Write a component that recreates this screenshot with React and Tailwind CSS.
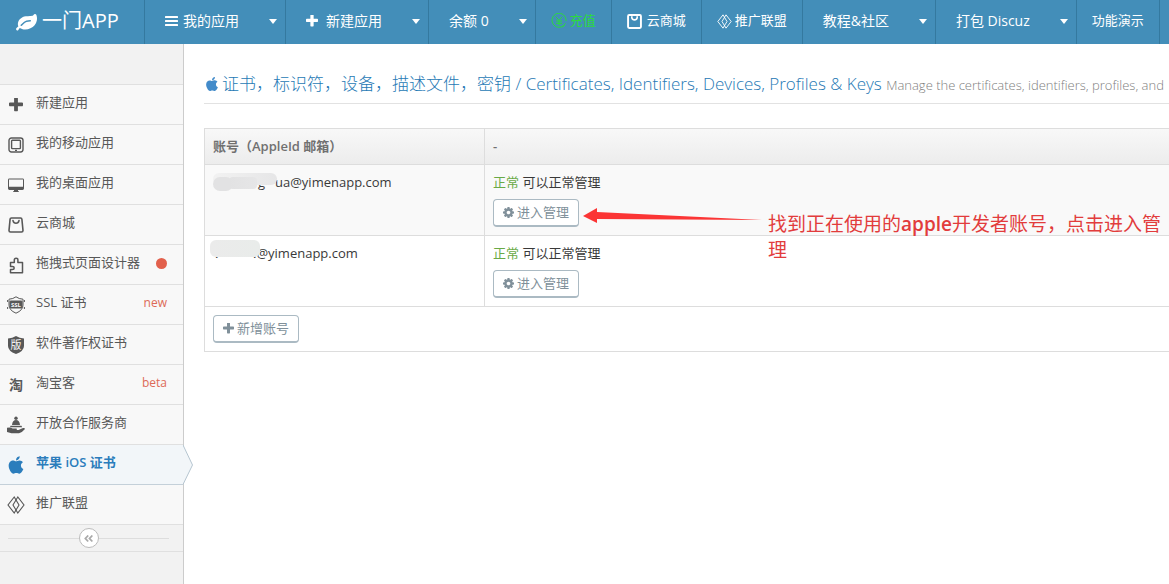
import React from "react";
import { FaApple, FaAngleDoubleLeft } from "react-icons/fa";

const LeafIcon = ({ className }) => (
  <svg viewBox="0 0 1792 1792" fill="currentColor" className={className}>
    <path d="M1280 832q0-26-19-45t-45-19q-172 0-318 49.5t-259.5 134-235.5 219.5q-19 21-19 45 0 26 19 45t45 19q24 0 45-19 27-24 74-71t67-66q137-124 268.5-176t313.5-52q26 0 45-19t19-45zm512-198q0 95-20 193-46 224-184.5 383t-357.5 268q-214 108-438 108-148 0-286-47-15-5-88-42t-96-37q-16 0-39.5 32t-45 70-52.5 70-60 32q-43 0-63.5-17.5t-45.5-59.5q-2-4-6-11t-5.5-10-3-9.5-1.5-13.5q0-35 31-73.5t68-65.5 68-56 31-48q0-4-14-38t-16-44q-9-51-9-104 0-115 43.5-220t119-184.5 170.5-139 204-95.5q55-18 145-25.5t179.5-9 178.5-6 163.5-24 113.5-56.5l29.5-29.5 29.5-28 27-20 36.5-16 43.5-4.5q39 0 70.5 46t47.5 112 24 124 8 96z" />
  </svg>
);

const PlusIcon = ({ className }) => (
  <svg viewBox="192 192 1408 1408" fill="currentColor" className={className}>
    <path d="M1600 736v192q0 40-28 68t-68 28h-416v416q0 40-28 68t-68 28h-192q-40 0-68-28t-28-68v-416h-416q-40 0-68-28t-28-68v-192q0-40 28-68t68-28h416v-416q0-40 28-68t68-28h192q40 0 68 28t28 68v416h416q40 0 68 28t28 68z" />
  </svg>
);

const CogIcon = ({ className }) => (
  <svg viewBox="128 128 1536 1536" fill="currentColor" className={className}>
    <path d="M1152 896q0-106-75-181t-181-75-181 75-75 181 75 181 181 75 181-75 75-181zm512-109v222q0 12-8 23t-20 13l-185 28q-19 54-39 91 35 50 107 138 10 12 10 25t-9 23q-27 37-99 108t-94 71q-12 0-26-9l-138-108q-44 23-91 38-16 136-29 186-7 28-36 28h-222q-14 0-24.5-8.5t-11.5-21.5l-28-184q-49-16-90-37l-141 107q-10 9-25 9-14 0-25-11-126-114-165-168-7-10-7-23 0-12 8-23 15-21 51-66.5t54-70.5q-27-50-41-99l-183-27q-13-2-21-12.5t-8-23.5v-222q0-12 8-23t19-13l186-28q14-46 39-92-40-57-107-138-10-12-10-24 0-10 9-23 26-36 98.5-107.5t94.5-71.5q13 0 26 10l138 107q44-23 91-38 16-136 29-186 7-28 36-28h222q14 0 24.5 8.5t11.5 21.5l28 184q49 16 90 37l142-107q9-9 24-9 13 0 25 10 129 119 165 170 7 8 7 22 0 12-8 23-15 21-51 66.5t-54 70.5q26 50 41 98l183 28q13 2 21 12.5t8 23.5z" />
  </svg>
);

const BarsIcon = ({ className }) => (
  <svg viewBox="0 0 13 12" fill="currentColor" className={className}>
    <rect x="0" y="1" width="13" height="2" rx="0.5" />
    <rect x="0" y="5" width="13" height="2" rx="0.5" />
    <rect x="0" y="9" width="13" height="2" rx="0.5" />
  </svg>
);

const BagIcon = ({ className }) => (
  <svg viewBox="0 0 16 16" fill="none" stroke="currentColor" strokeWidth="1.6" className={className}>
    <path d="M3.4 1h9.2q1.2 0 1.3 1.2L15 13.5q0 1.5-1.5 1.5h-11Q1 15 1 13.5L2.1 2.2Q2.2 1 3.4 1z" />
    <path d="M5 3.6Q5.6 6.2 8 6.2t3-2.6" strokeLinecap="round" />
  </svg>
);

const ShopIcon = ({ className }) => (
  <svg viewBox="0 0 14 14" fill="none" stroke="currentColor" strokeWidth="1.8" className={className}>
    <rect x="1" y="1" width="12" height="12" rx="1" />
    <path d="M4.5 2v1.5q.5 2 2.5 2t2.5-2V2" strokeWidth="1.5" />
  </svg>
);

const DiamondIcon = ({ className }) => (
  <svg viewBox="0 0 18 18" fill="none" stroke="currentColor" strokeWidth="1.1" className={className}>
    <path d="M7.2 1L1 9l6.2 8L12 9z" />
    <path d="M10.8 1L6 9l4.8 8L17 9z" />
  </svg>
);

const YenIcon = ({ className }) => (
  <svg viewBox="0 0 16 16" fill="none" stroke="currentColor" strokeWidth="1" className={className}>
    <path d="M14.4 10.2A7 7 0 1 1 15 8M13.6 12.2A7 7 0 0 1 11.6 14" />
    <path d="M5 3.8L8 7.5l3-3.7M8 7.5v5M5 8h6M5 10.3h6" />
  </svg>
);

const PhoneIcon = ({ className }) => (
  <svg viewBox="0 0 16 16" fill="none" stroke="currentColor" strokeWidth="1.4" className={className}>
    <rect x="1" y="1" width="14" height="14" rx="2.4" />
    <rect x="3.6" y="3.2" width="8.8" height="8.4" rx="0.8" />
    <path d="M7 13.4h2" />
  </svg>
);

const DesktopIcon = ({ className }) => (
  <svg viewBox="0 0 16 16" fill="currentColor" className={className}>
    <path
      d="M1.4 1.5h13.2q1.4 0 1.4 1.4v8.7q0 1.4-1.4 1.4H10v1.2h1v.8H5v-.8h1V13H1.4Q0 13 0 11.6V2.9q0-1.4 1.4-1.4zM1 2.5v7.3h14V2.5z"
      fillRule="evenodd"
    />
  </svg>
);

const PuzzleIcon = ({ className }) => (
  <svg viewBox="0 0 16 17" fill="none" stroke="currentColor" strokeWidth="1.5" className={className}>
    <path
      d="M2 5.5h3.8V3q0-1.8 1.8-1.8T9.4 3v2.5H14v10.3H2v-3.3h2q1.7 0 1.7-1.5T4 9.5H2z"
      strokeLinejoin="round"
    />
  </svg>
);

const SslIcon = ({ className }) => (
  <svg viewBox="0 0 18 18" fill="none" stroke="currentColor" strokeWidth="1" className={className}>
    <path d="M9 .8q3 2.2 7 2.4v6q0 5-7 8-7-3-7-8v-6q4-.2 7-2.4z" />
    <rect x="3" y="5" width="12" height="7" fill="currentColor" rx="0.5" />
    <path d="M.6 4v2M.6 11v2M17.4 4v2M17.4 11v2" />
    <text x="9" y="10.7" fontSize="6" fontWeight="700" textAnchor="middle" fill="#f8f8f8" stroke="none">
      SSL
    </text>
  </svg>
);

const CopyrightIcon = ({ className }) => (
  <svg viewBox="0 0 16 18" className={className}>
    <path fill="currentColor" d="M8 0q3.5 2.3 8 2.5V10q0 5-8 8-8-3-8-8V2.500Q4.500 2.300 8 0z" />
    <text x="8" y="12.5" fontSize="11" textAnchor="middle" fill="#f8f8f8">
      版
    </text>
  </svg>
);

const TaoIcon = () => <span className="text-sm leading-4 font-bold">淘</span>;

const ServiceIcon = ({ className }) => (
  <svg viewBox="0 0 18 18" fill="currentColor" className={className}>
    <circle cx="9" cy="2.2" r="1.7" />
    <path d="M5 9Q5.5 4 9 4t4 5z" />
    <path d="M3.5 9.8h11l.6 1.4H3z" />
    <path d="M0 11.8q3.5-.8 5.500.6h4q1 .9 0 1.7H6.500h5l4.500-2q1.800-.3 2 .8-3 3.600-6 4.300H4.500L0 16z" />
  </svg>
);

const navItems = [
  { label: "我的应用", icon: BarsIcon, iconClass: "h-3 w-[13px]", gap: "gap-[5px]", dropdown: true },
  { label: "新建应用", icon: PlusIcon, iconClass: "size-3", gap: "gap-2", dropdown: true },
  { label: "余额 0", dropdown: true },
  { label: "充值", icon: YenIcon, iconClass: "size-4", gap: "gap-[3px]", green: true },
  { label: "云商城", icon: ShopIcon, iconClass: "size-[15px]", gap: "gap-[5px]" },
  { label: "推广联盟", icon: DiamondIcon, iconClass: "size-[15px]", gap: "gap-[3px]" },
  { label: "教程&社区", dropdown: true },
  { label: "打包 Discuz", dropdown: true },
  { label: "功能演示" },
];

const menuItems = [
  { label: "新建应用", icon: PlusIcon, iconClass: "size-[14px]" },
  { label: "我的移动应用", icon: PhoneIcon, iconClass: "size-4" },
  { label: "我的桌面应用", icon: DesktopIcon, iconClass: "size-4" },
  { label: "云商城", icon: BagIcon, iconClass: "size-4" },
  { label: "拖拽式页面设计器", icon: PuzzleIcon, iconClass: "size-[17px]", dot: true },
  { label: "SSL 证书", icon: SslIcon, iconClass: "size-[18px]", tag: "new" },
  { label: "软件著作权证书", icon: CopyrightIcon, iconClass: "h-[18px] w-4" },
  { label: "淘宝客", icon: TaoIcon, tag: "beta" },
  { label: "开放合作服务商", icon: ServiceIcon, iconClass: "size-[18px]" },
  { label: "苹果 iOS 证书", icon: FaApple, iconClass: "size-5", active: true },
  { label: "推广联盟", icon: DiamondIcon, iconClass: "size-[18px]" },
];

function NavItem({ item }) {
  const Icon = item.icon;
  const content = (
    <span className={`flex items-center ${item.gap || ""}`}>
      {Icon && <Icon className={item.iconClass} />}
      {item.label}
    </span>
  );

  if (item.dropdown) {
    return (
      <button
        type="button"
        className="flex shrink-0 items-center gap-[30px] border-r border-[#34799f] pr-2 pb-[2px] pl-5 text-sm text-white"
      >
        {content}
        <span className="border-x-4 border-t-[5px] border-x-transparent border-t-white" />
      </button>
    );
  }

  return (
    <a
      href="#"
      className={`flex shrink-0 items-center border-r border-[#34799f] px-[15px] pb-[2px] text-[13px] ${
        item.green ? "text-[#2bdc3c]" : "text-white"
      }`}
    >
      {content}
    </a>
  );
}

function MenuItem({ item }) {
  const Icon = item.icon;
  return (
    <li className="relative">
      <a
        href="#"
        className={`flex h-10 items-center border-b pr-4 pb-[3px] pl-[6px] text-[13px] ${
          item.active
            ? "border-[#c4d0d9] bg-[#f2f6f9] font-semibold text-[#2b7dbc]"
            : "border-[#e0e0e0] bg-[#f8f8f8] text-[#585858]"
        }`}
      >
        <span className="mr-[10px] flex w-5 justify-center pt-1">
          <Icon className={item.iconClass} />
        </span>
        <span className="flex-1">{item.label}</span>
        {item.dot && <span className="size-[11px] rounded-full bg-[#e2604c]" />}
        {item.tag && <span className="text-xs text-[#dd6a57]">{item.tag}</span>}
      </a>
      {item.active && (
        <svg viewBox="0 0 11 40" className="absolute top-0 left-full h-10 w-[11px]">
          <path d="M0 0L9.5 20L0 39.5" fill="#f2f6f9" stroke="#b5c5d0" />
        </svg>
      )}
    </li>
  );
}

function ActionButton({ icon: Icon, children }) {
  return (
    <button
      type="button"
      className="flex h-7 items-center gap-[3px] rounded border border-b-2 border-[#abbac3] bg-white px-[9px] text-[13px] text-[#80909a]"
    >
      <Icon className="size-[11px]" />
      {children}
    </button>
  );
}

function Status() {
  return (
    <p className="mb-[6px] h-5 leading-[18px] text-[#393939]">
      <span className="text-[#69aa46]">正常</span> 可以正常管理
    </p>
  );
}

// Arrow and hint that point at the button they are placed next to
function Hint() {
  return (
    <div className="absolute top-0 left-full flex w-[584px] items-start">
      <svg viewBox="0 0 184 28" className="h-7 w-[184px] shrink-0">
        <path d="M4 17L18 9v4L183 21L18 20v4z" fill="#fb3535" />
      </svg>
      <p className="mt-3 ml-[5px] flex-1 text-[19px] leading-[26px] text-[#e23c3c]">
        找到正在使用的<span className="font-semibold">apple</span>开发者账号，点击进入管理
      </p>
    </div>
  );
}

export default function App() {
  return (
    <div className="flex min-h-screen flex-col overflow-hidden bg-white font-['Open_Sans','Noto_Sans_CJK_SC',sans-serif] text-[13px]">
      <header className="flex h-11 overflow-hidden bg-[#438eb9] whitespace-nowrap">
        <a
          href="#"
          className="flex w-[145px] shrink-0 items-center gap-[5px] border-r border-[#34799f] pb-[2px] pl-4 text-xl text-white"
        >
          <LeafIcon className="size-[21px]" />
          一门APP
        </a>
        {navItems.map((item) => (
          <NavItem key={item.label} item={item} />
        ))}
      </header>

      <div className="flex flex-1">
        <aside className="w-[184px] shrink-0 border-r border-[#ccc] bg-[#f2f2f2]">
          <ul className="mt-10 border-t border-[#e0e0e0]">
            {menuItems.map((item, i) => (
              <MenuItem key={i} item={item} />
            ))}
          </ul>
          <div className="flex h-[27px] items-center border-b border-[#e0e0e0] pr-[14px] pl-2">
            <span className="h-px flex-1 bg-[#ddd]" />
            <button
              type="button"
              aria-label="collapse"
              className="flex size-5 items-center justify-center rounded-full border border-[#bbb] bg-white text-[#aaa]"
            >
              <FaAngleDoubleLeft className="size-[11px]" />
            </button>
            <span className="h-px flex-1 bg-[#ddd]" />
          </div>
        </aside>

        <main className="min-w-0 flex-1 pl-5">
          <h1 className="mt-6 mb-6 flex h-9 items-center overflow-hidden border-b border-[#e2e2e2] pb-1 text-[17px] font-light whitespace-nowrap text-[#2679b5]">
            <FaApple className="mr-[2px] size-4 shrink-0 text-[#428bca]" />
            <span>
              证书，标识符，设备，描述文件，密钥 / Certificates, Identifiers, Devices, Profiles &amp; Keys{" "}
              <small className="text-[13px] text-[#808080]">Manage the certificates, identifiers, profiles, and</small>
            </span>
          </h1>

          <table className="w-full table-fixed border-collapse border-y border-l border-[#ddd] text-left">
            <thead>
              <tr className="h-9 bg-linear-to-b from-[#f8f8f8] to-[#ececec] text-[#707070]">
                <th className="w-[280px] border border-[#ddd] px-2 font-semibold">账号（AppleId 邮箱）</th>
                <th className="border-y border-[#ddd] px-2 font-semibold">-</th>
              </tr>
            </thead>
            <tbody className="align-top">
              <tr className="bg-[#f9f9f9]">
                <td className="border border-[#ddd] p-2 text-[#393939]">
                  <div className="relative flex leading-[18px]">
                    <span className="ml-[45px] w-[17px]">g</span>
                    <span>ua@yimenapp.com</span>
                    <span className="absolute top-0 left-0 h-3 w-16 rounded-md bg-linear-to-r from-[#f2f2f2] to-[#e6e6e7]" />
                    <span className="absolute top-1 left-0 h-[14px] w-5 rounded-full bg-[#e2e2e3]" />
                    <span className="absolute top-1 left-4 h-3 w-7 rounded-sm bg-linear-to-r from-[#e2e2e3] to-[#e6e6e7]" />
                  </div>
                </td>
                <td className="border-y border-[#ddd] p-2">
                  <Status />
                  <div className="relative w-fit">
                    <ActionButton icon={CogIcon}>进入管理</ActionButton>
                    <Hint />
                  </div>
                </td>
              </tr>
              <tr>
                <td className="border border-[#ddd] p-2 text-[#393939]">
                  <div className="relative flex leading-[18px]">
                    <span className="ml-[2px] w-[38px]">.</span>
                    <span>.@yimenapp.com</span>
                    <span className="absolute -top-1 -left-[3px] h-[17px] w-[50px] rounded-md bg-linear-to-r from-[#ebebeb] to-[#e9ecea]" />
                  </div>
                </td>
                <td className="border-y border-[#ddd] p-2">
                  <Status />
                  <ActionButton icon={CogIcon}>进入管理</ActionButton>
                </td>
              </tr>
              <tr>
                <td colSpan={2} className="border-y border-l border-[#ddd] p-2">
                  <ActionButton icon={PlusIcon}>新增账号</ActionButton>
                </td>
              </tr>
            </tbody>
          </table>
        </main>
      </div>
    </div>
  );
}
